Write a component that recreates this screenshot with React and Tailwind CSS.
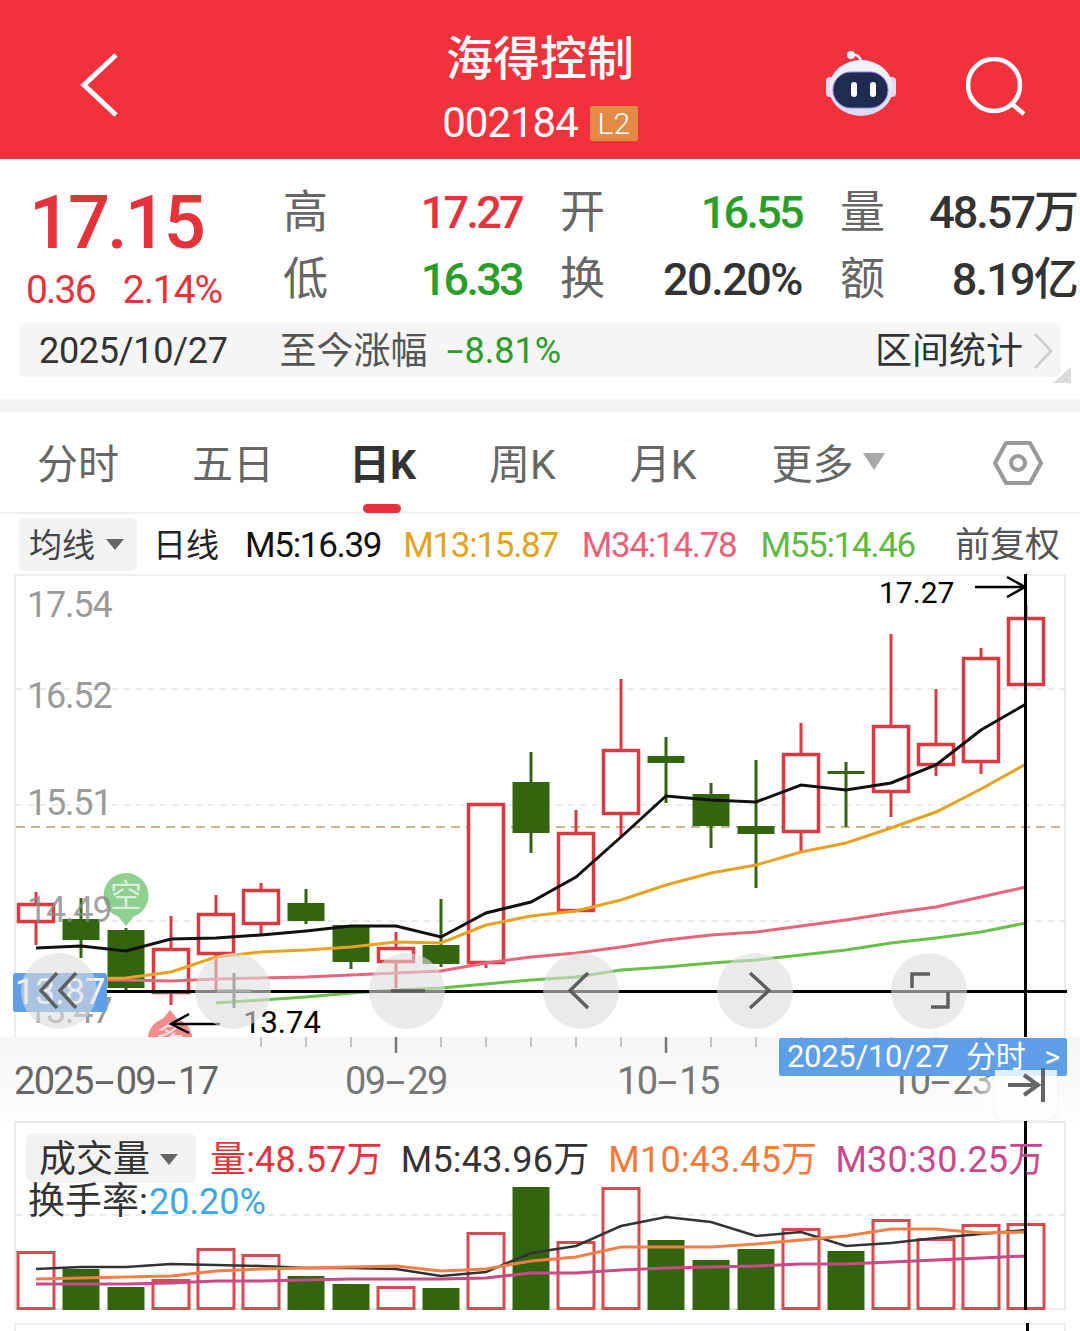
import React from "react";

const X = (i) => 36 + i * 45;
const candles = [
  [1, 903, 923, 892, 945],
  [0, 919, 940, 898, 958],
  [0, 930, 988, 928, 990],
  [1, 948, 994, 916, 1005],
  [1, 913, 955, 895, 990],
  [1, 889, 925, 883, 935],
  [0, 903, 921, 889, 924],
  [0, 925, 962, 925, 969],
  [1, 947, 963, 932, 988],
  [0, 945, 964, 899, 967],
  [1, 803, 964, 803, 968],
  [0, 782, 833, 752, 853],
  [1, 832, 912, 810, 912],
  [1, 749, 815, 679, 837],
  [0, 756, 763, 737, 803],
  [0, 794, 826, 783, 848],
  [0, 826, 834, 760, 888],
  [1, 753, 833, 723, 852],
  [0, 771, 774, 762, 827],
  [1, 725, 793, 634, 817],
  [1, 743, 766, 689, 776],
  [1, 657, 763, 648, 774],
  [1, 617, 686, 605, 686],
];
const m5 = [948, 946, 951, 939, 938, 935, 931, 926, 926, 937, 913, 902, 877, 837, 796, 800, 802, 785, 790, 783, 765, 730, 704];
const m13 = [null, 979, 978, 972, 957, 952, 950, 947, 942, 943, 925, 916, 911, 900, 885, 873, 865, 852, 843, 828, 812, 789, 764];
const m34 = [null, 980, 980, 981, 979, 978, 977, 975, 973, 971, 963, 957, 953, 947, 940, 935, 932, 926, 920, 913, 907, 897, 887];
const m55 = [null, null, null, null, 1003, 1000, 997, 993, 990, 988, 984, 980, 977, 970, 967, 963, 960, 955, 950, 943, 938, 932, 923];
const vols = [
  [1, 1251], [0, 1269], [0, 1287], [1, 1279], [1, 1248], [1, 1254], [0, 1276], [0, 1284], [1, 1286], [0, 1288], [1, 1232], [0, 1187],
  [1, 1241], [1, 1187], [0, 1240], [0, 1260], [0, 1249], [1, 1228], [0, 1251], [1, 1219], [1, 1238], [1, 1224], [1, 1223],
];
const v5 = [1269, 1267, 1267, 1264, 1265, 1266, 1268, 1268, 1269, 1276, 1272, 1253, 1246, 1226, 1217, 1222, 1236, 1232, 1246, 1243, 1238, 1234, 1230];
const v10 = [1279, 1278, 1277, 1276, 1271, 1269, 1268, 1267, 1266, 1271, 1269, 1261, 1257, 1247, 1247, 1247, 1244, 1240, 1236, 1229, 1229, 1233, 1232];
const v30 = [1284, 1284, 1284, 1283, 1281, 1281, 1280, 1279, 1279, 1279, 1278, 1273, 1273, 1270, 1268, 1267, 1266, 1264, 1264, 1262, 1260, 1258, 1256];

const pts = (a) =>
  a
    .map((y, i) => (y === null ? null : `${X(i)},${y}`))
    .filter(Boolean)
    .join(" ");

const RED = "#d93a40";
const GREEN = "#33640f";

function Tri({ w, h, color }) {
  return (
    <svg width={w} height={h} viewBox={`0 0 ${w} ${h}`} className="shrink-0">
      <polygon points={`0,0 ${w},0 ${w / 2},${h}`} fill={color} />
    </svg>
  );
}

function Chev({ points, stroke = "#5f5f5f" }) {
  return <polyline points={points} fill="none" stroke={stroke} strokeWidth="3.5" />;
}

function Dash() {
  return <span className="inline-block w-[23px] text-center tracking-normal scale-x-[1.9]">-</span>;
}

function DateLabel({ text, className }) {
  const parts = text.split("-");
  return (
    <div className={`absolute top-[25px] text-[38px] leading-none tracking-[-1.7px] whitespace-nowrap ${className}`}>
      {parts.map((p, i) => (
        <React.Fragment key={i}>
          {i > 0 && <Dash />}
          {p}
        </React.Fragment>
      ))}
    </div>
  );
}

function MainChart() {
  return (
    <div className="relative h-[463px] mx-[14px] border-x-2 border-t-2 border-[#ececec] overflow-visible">
      <svg width="1080" height="463" viewBox="0 574 1080 463" className="absolute left-[-16px] top-[-2px]">
        {[689, 805, 921].map((y) => (
          <line key={y} x1="16" x2="1066" y1={y} y2={y} stroke="#e2e2e2" strokeWidth="1.5" strokeDasharray="6 6" />
        ))}
        <line x1="16" x2="1066" y1="827" y2="827" stroke="#c9b48e" strokeWidth="2" strokeDasharray="9 6" />
        <g>
          <circle cx="126" cy="895.5" r="22.5" fill="#8fcf8f" />
          <polygon points="117,915 135,915 126,926" fill="#8fcf8f" />
          <text x="126" y="907" textAnchor="middle" fontSize="32" fill="#d6f0d6">空</text>
          <circle cx="170" cy="1040" r="22.5" fill="#f28c8c" />
          <polygon points="161,1021 179,1021 170,1010" fill="#f28c8c" />
          <text x="170" y="1047" textAnchor="middle" fontSize="28" fill="#fde2e2">多</text>
        </g>
        {candles.map(([up, top, bot, wt, wb], i) => {
          const x = X(i);
          const c = up ? RED : GREEN;
          return (
            <g key={i}>
              <line x1={x} x2={x} y1={wt} y2={wb} stroke={c} strokeWidth="3" />
              {up ? (
                <rect x={x - 17.5} y={top + 1.5} width="35" height={bot - top - 3} fill="#fff" stroke={c} strokeWidth="3.5" />
              ) : (
                <rect x={x - 18.5} y={top} width="37" height={bot - top} fill={c} />
              )}
            </g>
          );
        })}
        <polyline points={pts(m55)} fill="none" stroke="#67c04a" strokeWidth="3" />
        <polyline points={pts(m34)} fill="none" stroke="#e8647c" strokeWidth="3" />
        <polyline points={pts(m13)} fill="none" stroke="#e6a321" strokeWidth="3" />
        <polyline points={pts(m5)} fill="none" stroke="#111" strokeWidth="3" />
        <line x1="14" x2="1067" y1="991.5" y2="991.5" stroke="#000" strokeWidth="3" />
        <line x1="1025.5" x2="1025.5" y1="574" y2="1037" stroke="#000" strokeWidth="3" />
        <polyline points="975,587 1024,587" fill="none" stroke="#000" strokeWidth="2.5" />
        <polyline points="1007,577 1025,587 1007,597" fill="none" stroke="#000" strokeWidth="2.5" />
        <polyline points="220,1024 172,1024" fill="none" stroke="#000" strokeWidth="2.5" />
        <polyline points="189,1014 171,1024 189,1033" fill="none" stroke="#000" strokeWidth="2.5" />
      </svg>

      <span className="absolute left-[11px] top-[11px] text-[36px] leading-none tracking-[-1.2px] text-[#9a9a9a]">17.54</span>
      <span className="absolute left-[11px] top-[102px] text-[36px] leading-none tracking-[-1.2px] text-[#9a9a9a]">16.52</span>
      <span className="absolute left-[11px] top-[209px] text-[36px] leading-none tracking-[-1.2px] text-[#9a9a9a]">15.51</span>
      <span className="absolute left-[11px] top-[316px] text-[36px] leading-none tracking-[-1.2px] text-[#8a8a8a]/80">14.49</span>
      <span className="absolute left-[11px] top-[417px] text-[36px] leading-none tracking-[-1.2px] text-[#9a9a9a]">13.47</span>
      <span className="absolute left-[863px] top-[2px] text-[30px] leading-none text-black">17.27</span>
      <span className="absolute left-[227px] top-[431px] text-[31px] leading-none text-black">13.74</span>

      <span className="absolute left-[-3px] top-[397px] w-[94px] h-[39px] rounded-[3px] bg-[#5f9fe8] text-white text-[36px] leading-[39px] text-center">13.87</span>

      {/* round overlay buttons */}
      <div className="absolute left-[5px] top-[377px] flex gap-[98px]">
        {[0, 1, 2, 3, 4, 5].map((i) => (
          <div key={i} className="w-[76px] h-[76px] rounded-full bg-[#dcdcdc]/60" />
        ))}
      </div>
      <svg width="1080" height="463" viewBox="0 574 1080 463" className="absolute left-[-16px] top-[-2px] pointer-events-none">
        <Chev points="57,973 41,990.5 57,1008" />
        <Chev points="76,973 60,990.5 76,1008" />
        <path d="M234 973 V1008 M217 991 H251" fill="none" stroke="#a8a8a8" strokeWidth="3" />
        <path d="M391 991 H425" fill="none" stroke="#5a5a5a" strokeWidth="3.5" />
        <Chev points="588,973 570,990.5 588,1008" />
        <Chev points="750,973 769,990.5 750,1008" />
        <Chev points="912,988 912,974 930,974" />
        <Chev points="948,992 948,1007 931,1007" />
      </svg>
    </div>
  );
}

function Axis() {
  const ticks = [261, 306, 351, 396, 441, 486, 531, 576, 621, 666, 711, 756, 801, 846, 891, 936, 981];
  return (
    <div className="relative h-[84px] bg-gradient-to-b from-[#f6f6f6] to-[#fdfdfd]">
      <svg width="1080" height="20" viewBox="0 1037 1080 20" className="absolute left-0 top-0">
        {ticks.map((x) => (
          <line key={x} x1={x} x2={x} y1="1037" y2={x === 396 || x === 666 || x === 936 ? 1053 : 1047} stroke={x === 396 || x === 666 ? "#777" : "#c4c4c4"} strokeWidth={x === 396 || x === 666 ? 2.5 : 2} />
        ))}
      </svg>
      <DateLabel text="2025-09-17" className="left-[14px] text-[#666]" />
      <DateLabel text="09-29" className="left-[345px] text-[#777]" />
      <DateLabel text="10-15" className="left-[617px] text-[#777]" />
      <DateLabel text="10-23" className="left-[890px] text-[#777]" />
      <div className="absolute left-[965px] top-[40px] w-[30px] h-[30px] bg-gradient-to-r from-transparent to-white/70" />
      <div className="absolute left-[779px] top-[1px] w-[288px] h-[38px] rounded-[2px] bg-[#5f9fe8] text-white text-[31px] leading-[38px] tracking-[-0.3px] whitespace-nowrap pl-[8px]">
        <span>2025/10/27</span>
        <span className="ml-[17px] text-[30px]">分时</span>
        <span className="ml-[19px] text-[30px]">&gt;</span>
      </div>
      <div className="absolute left-[995px] top-[33px] w-[62px] h-[50px] rounded-b-[12px] bg-white/80 shadow-[0_1px_4px_rgba(0,0,0,0.06)]">
        <svg width="40" height="36" viewBox="0 0 40 36" className="absolute left-[11px] top-[-3px]">
          <path d="M2 18 H32 M18 8 L32 18 L18 28" fill="none" stroke="#666" strokeWidth="4" />
          <path d="M37 1 V35" fill="none" stroke="#666" strokeWidth="4" />
        </svg>
      </div>
    </div>
  );
}

function VolPanel() {
  return (
    <div className="relative h-[189px] mx-[14px] border-2 border-[#ececec]">
      <svg width="1080" height="189" viewBox="0 1121 1080 189" className="absolute left-[-16px] top-[-2px]">
        <line x1="16" x2="1066" y1="1215" y2="1215" stroke="#e2e2e2" strokeWidth="1.5" strokeDasharray="6 6" />
        {vols.map(([up, top], i) => {
          const x = X(i);
          return up ? (
            <rect key={i} x={x - 18} y={top + 1.5} width="36" height={1310 - top - 3} fill="#fff" stroke="#d9494f" strokeWidth="3" />
          ) : (
            <rect key={i} x={x - 18.5} y={top} width="37" height={1310 - top} fill={GREEN} />
          );
        })}
        <polyline points={pts(v5)} fill="none" stroke="#333" strokeWidth="2.5" />
        <polyline points={pts(v10)} fill="none" stroke="#f27f45" strokeWidth="3" />
        <polyline points={pts(v30)} fill="none" stroke="#c84a86" strokeWidth="3" />
        <line x1="1025.5" x2="1025.5" y1="1121" y2="1310" stroke="#000" strokeWidth="3" />
      </svg>
      <div className="relative flex items-center pl-[10px] pt-[10px] text-[36px] leading-none whitespace-nowrap">
        <div className="w-[170px] h-[50px] rounded-[8px] bg-[#f2f2f2] flex items-center pl-[13px] pt-[3px] gap-[10px] text-[#333] text-[37px]">
          成交量
          <Tri w={18} h={11} color="#666" />
        </div>
        <div className="flex tracking-[0.2px] pt-[4px]">
          <span className="ml-[14px] text-[#e0353a]">量:48.57万</span>
          <span className="ml-[18px] text-[#333]">M5:43.96万</span>
          <span className="ml-[19px] text-[#f47a3c]">M10:43.45万</span>
          <span className="ml-[18px] text-[#c8488a]">M30:30.25万</span>
        </div>
      </div>
      <div className="relative pl-[12px] mt-[-1px] text-[37px] leading-[40px] text-[#333] whitespace-nowrap">
        换手率:<span className="ml-[1px] text-[36px] text-[#3aa8e6]">20.20%</span>
      </div>
    </div>
  );
}

function Stat({ label, value, color, track = "tracking-[-2.7px]" }) {
  return (
    <div className="flex items-center justify-between h-[67px]">
      <span className="text-[45px] leading-none text-[#666]">{label}</span>
      <span className={`text-[45px] leading-none font-medium whitespace-nowrap ${track} ${color}`}>{value}</span>
    </div>
  );
}

export default function App() {
  return (
    <div className="relative w-[1080px] h-[1331px] overflow-hidden bg-white [font-family:Roboto,'Noto_Sans_CJK_SC',sans-serif]">
      {/* header */}
      <header className="relative h-[159px] bg-[#f1323c] flex items-center justify-between pl-[80px] pr-[54px] pt-[10px]">
        <svg width="40" height="66" viewBox="0 0 40 66" className="shrink-0">
          <polyline points="36,3 4,33 36,63" fill="none" stroke="#fff" strokeWidth="5" />
        </svg>
        <div className="absolute left-0 right-0 top-[33px] flex flex-col items-center text-white">
          <div className="text-[47px] leading-[52px] font-medium">海得控制</div>
          <div className="mt-[16px] flex items-center gap-[12px]">
            <span className="text-[42px] leading-[44px] tracking-[-1px]">002184</span>
            <span className="w-[48px] h-[35px] rounded-[2px] bg-[#e58a45] text-[30px] leading-[35px] font-light text-center text-[#fff]">L2</span>
          </div>
        </div>
        <div className="flex items-center gap-[68px]">
          <svg width="74" height="68" viewBox="0 0 74 68" className="shrink-0 mb-[5px]">
            <defs>
              <linearGradient id="head" x1="0" y1="0" x2="0" y2="1">
                <stop offset="0" stopColor="#f6f6fd" />
                <stop offset="1" stopColor="#dcd8f6" />
              </linearGradient>
            </defs>
            <path d="M27 7 C33 6 36 9 37 13" fill="none" stroke="#eceaf8" strokeWidth="2.5" />
            <circle cx="27" cy="7" r="4" fill="#f1eefa" />
            <rect x="2" y="29" width="8" height="20" rx="4" fill="#dcdcf2" />
            <rect x="64" y="29" width="8" height="20" rx="4" fill="#dcdcf2" />
            <ellipse cx="37" cy="40" rx="32" ry="28" fill="url(#head)" />
            <rect x="9" y="24" width="55" height="36" rx="18" fill="#1f2b4f" stroke="#8f7ee0" strokeWidth="1" />
            <rect x="27" y="34" width="6" height="15" rx="3" fill="#fff" />
            <rect x="46" y="34" width="6" height="15" rx="3" fill="#fff" />
          </svg>
          <svg width="60" height="60" viewBox="0 0 60 60" className="shrink-0 mt-[5px]">
            <circle cx="28" cy="28" r="26" fill="none" stroke="#fff" strokeWidth="4.5" />
            <path d="M46 47 L58 57" fill="none" stroke="#fff" strokeWidth="4.5" />
          </svg>
        </div>
      </header>

      {/* quote */}
      <section className="relative h-[240px]">
        <div className="h-[164px] flex">
          <div className="w-[283px] shrink-0 pl-[26px] pt-[27px]">
            <div className="pl-[3px] text-[74px] leading-none font-medium tracking-[-3px] text-[#e6323a]">17.15</div>
            <div className="mt-[11px] flex gap-[28px] text-[39px] leading-none text-[#e6323a] whitespace-nowrap">
              <span className="tracking-[-1.8px]">0.36</span>
              <span className="tracking-[-1.1px]">2.14%</span>
            </div>
          </div>
          <div className="pt-[20px] h-fit grid grid-cols-[239px_242px_237px] auto-rows-[67px] gap-x-[38px]">
            <Stat label="高" value="17.27" color="text-[#e6323a]" />
            <Stat label="开" value="16.55" color="text-[#2a9d2a]" />
            <Stat label="量" value="48.57万" color="text-[#333]" track="tracking-[-2px]" />
            <Stat label="低" value="16.33" color="text-[#2a9d2a]" />
            <Stat label="换" value="20.20%" color="text-[#333]" track="tracking-[-1.5px]" />
            <Stat label="额" value="8.19亿" color="text-[#333]" track="tracking-[-1.8px]" />
          </div>
        </div>
        <div className="mx-[19px] h-[54px] rounded-[6px] bg-[#f5f5f5] flex items-center pl-[20px] pr-[8px] pt-[2px] whitespace-nowrap">
          <span className="text-[36px] leading-none tracking-[-0.3px] text-[#333]">2025/10/27</span>
          <span className="ml-[52px] text-[37px] leading-none text-[#555]">至今涨幅</span>
          <span className="ml-[17px] text-[36px] leading-none text-[#2a9d2a]">
            <span className="inline-block w-[20px] text-center scale-x-[1.7]">-</span>8.81%
          </span>
          <span className="ml-auto text-[37px] leading-none text-[#333]">区间统计</span>
          <svg width="20" height="38" viewBox="0 0 20 38" className="ml-[10px] shrink-0">
            <polyline points="2,2 18,19 2,36" fill="none" stroke="#cfcfcf" strokeWidth="3" />
          </svg>
        </div>
        <svg width="18" height="16" viewBox="0 0 18 16" className="absolute left-[1053px] top-[208px]">
          <polygon points="18,0 18,16 0,16" fill="#dcdcdc" />
        </svg>
      </section>

      <div className="h-[13px] bg-[#f5f5f5]" />

      {/* tabs */}
      <nav className="relative h-[102px] border-b-2 border-[#eeeeee] flex items-center pl-[37px] pt-[6px] text-[41px] leading-none text-[#666] whitespace-nowrap">
        <span>分时</span>
        <span className="ml-[73px]">五日</span>
        <span className="ml-[75px] font-bold text-[#333]">日K</span>
        <span className="ml-[73px]">周K</span>
        <span className="ml-[74px]">月K</span>
        <span className="ml-[75px]">更多</span>
        <span className="ml-[9px] mb-[7px]"><Tri w={22} h={17} color="#a8a8a8" /></span>
        <svg width="52" height="48" viewBox="0 0 52 48" className="ml-[107px] mb-[4px] shrink-0">
          <polygon points="3,24 14,4 38,4 49,24 38,44 14,44" fill="none" stroke="#999" strokeWidth="4" strokeLinejoin="round" />
          <circle cx="26" cy="24" r="7" fill="none" stroke="#999" strokeWidth="4" />
        </svg>
        <div className="absolute left-[363px] bottom-[-1px] w-[38px] h-[9px] rounded-full bg-[#e6323a]" />
      </nav>

      {/* ma legend */}
      <div className="h-[60px] flex items-center pl-[19px] whitespace-nowrap">
        <div className="w-[118px] h-[53px] rounded-[6px] bg-[#f2f2f2] flex items-center pl-[10px] gap-[11px] text-[33px] leading-none text-[#444]">
          <span className="pt-[2px]">均线</span>
          <Tri w={18} h={11} color="#666" />
        </div>
        <span className="ml-[16px] pt-[3px] text-[33px] leading-none text-[#222]">日线</span>
        <div className="ml-[26px] pt-[3px] flex text-[35px] leading-none tracking-[-1.3px]">
          <span className="text-[#111]">M5:16.39</span>
          <span className="ml-[22px] text-[#e5a11e]">M13:15.87</span>
          <span className="ml-[24px] text-[#ee5f7a]">M34:14.78</span>
          <span className="ml-[24px] text-[#5cbb3f]">M55:14.46</span>
        </div>
        <span className="ml-auto mr-[20px] pt-[3px] text-[35px] leading-none text-[#555]">前复权</span>
      </div>

      <MainChart />
      <Axis />
      <VolPanel />
      <div className="h-[13px]" />
      <div className="relative h-[20px] mx-[14px] border-x-2 border-t-2 border-[#ececec]">
        <div className="absolute left-[1010px] top-[-2px] w-[3px] h-[20px] bg-black" />
      </div>
    </div>
  );
}
